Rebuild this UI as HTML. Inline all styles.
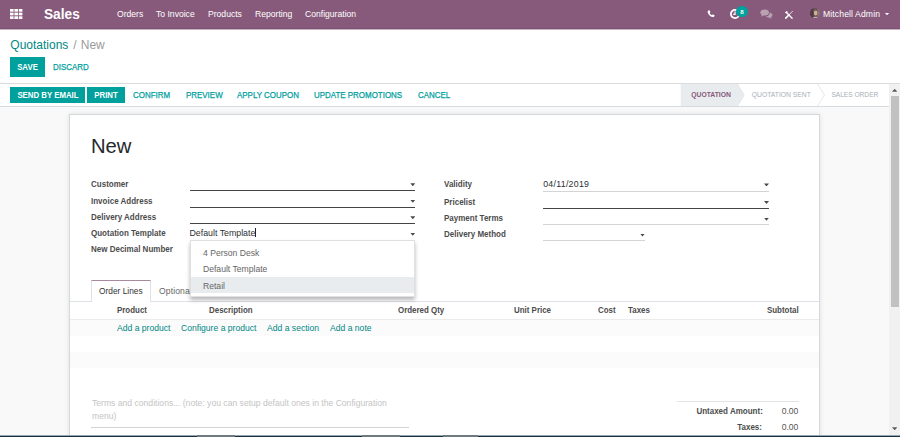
<!DOCTYPE html>
<html>
<head>
<meta charset="utf-8">
<title>Odoo - Quotations</title>
<style>
*{box-sizing:border-box;margin:0;padding:0}
html,body{width:900px;height:437px;overflow:hidden;background:#f9f9f9;font-family:"Liberation Sans",sans-serif;font-size:8.5px;color:#4c4c4c}
.abs{position:absolute;white-space:nowrap}
#nav{left:0;top:0;width:900px;height:30px;background:linear-gradient(#875a7b 0,#875a7b 28px,#7f5273 28px,#7f5273 29px,#c7b3c1 29px,#c7b3c1 30px)}
#nav .t{position:absolute;color:#fff;white-space:nowrap}
#cp{left:0;top:30px;width:900px;height:54px;background:#fff;border-bottom:1px solid #dcdcdc}
#sb{left:0;top:84px;width:889px;height:23px;background:#fff;border-bottom:1px solid #d6dbe0}
.btnp{position:absolute;background:#00a09d;color:#fff;font-weight:bold;text-align:center;white-space:nowrap}
.btnl{position:absolute;color:#00a09d;white-space:nowrap;-webkit-text-stroke:0.25px #00a09d;transform:scaleX(0.914);transform-origin:0 50%}
.sx{display:inline-block;transform:scaleX(0.9);transform-origin:50% 50%}
#sheet{left:69px;top:114px;width:751px;height:330px;background:#fff;border:1px solid #d3d8dd;box-shadow:0 0 5px rgba(0,0,0,0.1)}
.lbl{position:absolute;font-weight:bold;color:#4c4c4c;white-space:nowrap;font-size:8.3px;transform:scaleX(0.965);transform-origin:0 50%}
.line{position:absolute;height:1px;background:#454545}
.lline{position:absolute;height:1px;background:#d4d4d4}
.caret{position:absolute;width:5px;height:3px;background:#4a4a4a;clip-path:polygon(0 0,100% 0,50% 100%)}
.th{position:absolute;font-weight:bold;color:#4c4c4c;white-space:nowrap;font-size:8.3px;transform:scaleX(0.955);transform-origin:0 50%}
.lnk{z-index:2;position:absolute;color:#008784;white-space:nowrap;font-size:8.6px}
</style>
</head>
<body>
<!-- NAVBAR -->
<div id="nav" class="abs">
  <svg style="position:absolute;left:10.3px;top:8.7px" width="12.4" height="10" viewBox="0 0 12.4 9.6" preserveAspectRatio="none">
    <g fill="#fff"><rect x="0" y="0" width="3.6" height="2.6"/><rect x="4.4" y="0" width="3.6" height="2.6"/><rect x="8.8" y="0" width="3.6" height="2.6"/>
    <rect x="0" y="3.5" width="3.6" height="2.6"/><rect x="4.4" y="3.5" width="3.6" height="2.6"/><rect x="8.8" y="3.5" width="3.6" height="2.6"/>
    <rect x="0" y="7" width="3.6" height="2.6"/><rect x="4.4" y="7" width="3.6" height="2.6"/><rect x="8.8" y="7" width="3.6" height="2.6"/></g>
  </svg>
  <div class="t" style="left:44.3px;top:4.7px;font-size:15px;font-weight:bold;transform:scaleX(0.912);transform-origin:0 0">Sales</div>
  <div class="t" style="left:117px;top:9px;font-size:8.6px">Orders</div>
  <div class="t" style="left:156px;top:9px;font-size:8.6px">To Invoice</div>
  <div class="t" style="left:208px;top:9px;font-size:8.6px">Products</div>
  <div class="t" style="left:255px;top:9px;font-size:8.6px">Reporting</div>
  <div class="t" style="left:305px;top:9px;font-size:8.6px">Configuration</div>
  <!-- phone -->
  <svg style="position:absolute;left:707.2px;top:10.1px" width="8" height="7.7" viewBox="0 0 9 9" preserveAspectRatio="none"><path d="M2.2 0.4 C1.2 0.8 0.5 1.6 0.8 2.9 C1.4 5.4 3.6 7.6 6.1 8.2 C7.4 8.5 8.2 7.8 8.6 6.8 C8.7 6.5 8.6 6.3 8.3 6.1 L6.9 5.3 C6.6 5.1 6.3 5.2 6.1 5.4 L5.5 6.1 C4.4 5.6 3.4 4.6 2.9 3.5 L3.6 2.9 C3.8 2.7 3.9 2.4 3.7 2.1 L2.9 0.7 C2.7 0.4 2.5 0.3 2.2 0.4 Z" fill="#fff"/></svg>
  <!-- clock -->
  <svg style="position:absolute;left:728.6px;top:7.8px" width="12" height="12" viewBox="0 0 12 12"><circle cx="6" cy="6" r="4.1" fill="none" stroke="#fff" stroke-width="1.8"/><path d="M6 3.6V6.3H4.2" fill="none" stroke="#fff" stroke-width="1.2"/></svg>
  <div style="position:absolute;left:736.2px;top:5.9px;width:11.6px;height:11.4px;border-radius:6px;background:#00a09d"></div>
  <div class="t" style="left:740.2px;top:8.4px;font-size:6.2px;font-weight:bold">8</div>
  <!-- chat -->
  <svg style="position:absolute;left:760px;top:9px" width="13" height="11" viewBox="0 0 13 11"><path d="M4.6 0.6 C7.2 0.6 9 1.9 9 3.6 C9 5.3 7.2 6.6 4.6 6.6 C4.2 6.6 3.8 6.56 3.4 6.5 C2.8 7.1 1.9 7.5 1 7.6 C1.4 7.1 1.7 6.6 1.8 5.9 C0.8 5.4 0.3 4.5 0.3 3.6 C0.3 1.9 2 0.6 4.6 0.6 Z" fill="#b9a2b1"/><path d="M9.8 3.4 C11.5 3.8 12.4 4.8 12.4 5.9 C12.4 6.8 11.9 7.6 10.9 8.1 C11 8.7 11.3 9.2 11.7 9.7 C10.8 9.6 9.9 9.2 9.3 8.6 C8 8.8 6.6 8.5 5.7 7.6 C8.2 7.3 9.9 5.7 9.8 3.4 Z" fill="#b9a2b1"/></svg>
  <!-- tools -->
  <svg style="position:absolute;left:783.6px;top:10.1px" width="9.7" height="9.7" viewBox="0 0 11 11"><path d="M2.6 2.6 L9.2 9.4" stroke="#fff" stroke-width="1.5" stroke-linecap="round" fill="none"/><path d="M1.3 2.5 L2.6 3.6 L3.8 2.5 L2.7 1.2" stroke="#fff" stroke-width="1.1" fill="none"/><path d="M9.6 1.6 L6 5.2" stroke="#fff" stroke-width="0.9" stroke-linecap="round" fill="none"/><path d="M5.6 5.6 L2 9.2" stroke="#fff" stroke-width="1.8" stroke-linecap="round" fill="none"/></svg>
  <!-- avatar -->
  <svg style="position:absolute;left:810px;top:7.8px" width="10" height="10.4" viewBox="0 0 20 20" preserveAspectRatio="none"><defs><clipPath id="av"><circle cx="10" cy="10" r="10"/></clipPath></defs><g clip-path="url(#av)"><rect width="20" height="20" fill="#6b4f55"/><rect x="0" y="0" width="7" height="20" fill="#4f3a46"/><rect x="15" y="2" width="5" height="18" fill="#8d7575"/><ellipse cx="11.3" cy="9.5" rx="3.6" ry="5" fill="#cfae9d"/><path d="M5.5 7 C7 1.5 15 1.5 16.5 7 C13 4.6 9 4.6 5.5 7 Z" fill="#7a6558"/><path d="M5 20 C6 15.5 16 15.5 17 20 Z" fill="#b9a8ad"/></g></svg>
  <div class="t" style="left:823px;top:9px;font-size:8.6px;letter-spacing:0.12px">Mitchell Admin</div>
  <div style="position:absolute;left:884.7px;top:12.7px;width:4.7px;height:2.6px;background:#fff;clip-path:polygon(0 0,100% 0,50% 100%)"></div>
</div>

<!-- CONTROL PANEL -->
<div id="cp" class="abs">
  <div class="abs" style="left:10.3px;top:8px;font-size:12px;color:#008784">Quotations<span style="color:#9a9a9a"><span style="margin:0 4.3px 0 4.8px">/</span>New</span></div>
  <div class="btnp" style="left:10px;top:27px;width:35px;height:20px;line-height:21.8px;font-size:8.7px"><span class="sx">SAVE</span></div>
  <div class="btnl" style="left:53px;top:27px;line-height:21.8px;font-size:8.7px">DISCARD</div>
</div>

<!-- STATUS BAR -->
<div id="sb" class="abs">
  <div class="btnp" style="left:10px;top:3px;width:75px;height:16px;line-height:17px;font-size:8.7px"><span class="sx">SEND BY EMAIL</span></div>
  <div class="btnp" style="left:87px;top:3px;width:37.5px;height:16px;line-height:17px;font-size:8.7px"><span class="sx">PRINT</span></div>
  <div class="btnl" style="left:133px;top:3px;line-height:17px;font-size:8.7px">CONFIRM</div>
  <div class="btnl" style="left:186px;top:3px;line-height:17px;font-size:8.7px">PREVIEW</div>
  <div class="btnl" style="left:237px;top:3px;line-height:17px;font-size:8.7px">APPLY COUPON</div>
  <div class="btnl" style="left:314px;top:3px;line-height:17px;font-size:8.7px">UPDATE PROMOTIONS</div>
  <div class="btnl" style="left:418px;top:3px;line-height:17px;font-size:8.7px">CANCEL</div>
  <svg style="position:absolute;left:680px;top:0" width="209" height="22" viewBox="0 0 209 22">
    <path d="M0.7 0 H57.5 L64.2 11 L57.5 22 H0.7 Z" fill="#e9ecef"/>
    <path d="M57.5 0 L64.2 11 L57.5 22" fill="none" stroke="#dee2e6" stroke-width="0.8"/>
    <path d="M137.5 0 L144.5 11 L137.5 22" fill="none" stroke="#dee2e6" stroke-width="0.8"/>
    <text x="11.2" y="12.7" font-family="Liberation Sans, sans-serif" font-size="6.8" font-weight="bold" fill="#875a7b">QUOTATION</text>
    <text x="71.8" y="12.7" font-family="Liberation Sans, sans-serif" font-size="6.75" fill="#a7afb7">QUOTATION SENT</text>
    <text x="151.4" y="12.7" font-family="Liberation Sans, sans-serif" font-size="6.6" fill="#a7afb7">SALES ORDER</text>
  </svg>
</div>

<!-- SHEET -->
<div id="sheet" class="abs">
  <div class="abs" style="left:21px;top:19.4px;font-size:20.8px;color:#24282c;transform:scaleX(0.972);transform-origin:0 0">New</div>

  <div class="lbl" style="left:21px;top:64px">Customer</div>
  <div class="lbl" style="left:21px;top:80.5px">Invoice Address</div>
  <div class="lbl" style="left:21px;top:97px">Delivery Address</div>
  <div class="lbl" style="left:21px;top:113.3px">Quotation Template</div>
  <div class="lbl" style="left:21px;top:129.2px">New Decimal Number</div>

  <div class="line" style="left:120px;top:75px;width:225px"></div>
  <div class="line" style="left:120px;top:92px;width:225px"></div>
  <div class="line" style="left:120px;top:108px;width:225px"></div>
  <div class="caret" style="left:340.3px;top:68.3px"></div>
  <div class="caret" style="left:340.3px;top:84.8px"></div>
  <div class="caret" style="left:340.3px;top:101.2px"></div>
  <div class="caret" style="left:340.3px;top:117.7px"></div>
  <div class="abs" style="left:119.5px;top:113.1px;font-size:8.8px;color:#2b2f33">Default Template<span style="display:inline-block;width:1px;height:9px;background:#222;vertical-align:-1px"></span></div>

  <div class="lbl" style="left:374px;top:64px">Validity</div>
  <div class="lbl" style="left:374px;top:81.6px">Pricelist</div>
  <div class="lbl" style="left:374px;top:98.3px">Payment Terms</div>
  <div class="lbl" style="left:374px;top:114.3px">Delivery Method</div>
  <div class="abs" style="left:473.2px;top:64.3px;font-size:8.8px;letter-spacing:0.27px;color:#2b2f33">04/11/2019</div>
  <div class="lline" style="left:473px;top:76px;width:226px"></div>
  <div class="line" style="left:473px;top:93px;width:226px"></div>
  <div class="lline" style="left:473px;top:109px;width:226px"></div>
  <div class="lline" style="left:473px;top:125px;width:102px"></div>
  <div class="caret" style="left:694px;top:68.4px"></div>
  <div class="caret" style="left:694px;top:85.9px"></div>
  <div class="caret" style="left:694px;top:102.8px"></div>
  <div class="caret" style="left:570px;top:118.5px"></div>

  <!-- tabs -->
  <div class="abs" style="left:0;top:186px;width:749px;height:1px;background:#dee2e6"></div>
  <div class="abs" style="left:21px;top:165px;width:60px;height:22px;background:#fff;border:1px solid #dee2e6;border-top:1px solid #a78a9e;border-bottom:none"></div>
  <div class="abs" style="left:29px;top:171.2px;font-size:8.6px;color:#333;transform:scaleX(0.972);transform-origin:0 50%">Order Lines</div>
  <div class="abs" style="left:89px;top:171.2px;font-size:8.6px;color:#666;letter-spacing:0.1px">Optional Products</div>

  <!-- table header -->
  <div class="th" style="left:47px;top:190px">Product</div>
  <div class="th" style="left:139px;top:190px">Description</div>
  <div class="th" style="left:328px;top:190px">Ordered Qty</div>
  <div class="th" style="left:444px;top:190px">Unit Price</div>
  <div class="th" style="left:528px;top:190px">Cost</div>
  <div class="th" style="left:558px;top:190px">Taxes</div>
  <div class="th" style="left:697px;top:190px">Subtotal</div>
  <div class="abs" style="left:0;top:204px;width:749px;height:1px;background:#ebebeb"></div>
  <div class="lnk" style="left:47px;top:207.7px">Add a product</div>
  <div class="lnk" style="left:111px;top:207.7px">Configure a product</div>
  <div class="lnk" style="left:197px;top:207.7px">Add a section</div>
  <div class="lnk" style="left:260px;top:207.7px">Add a note</div>
  <div class="abs" style="left:0;top:205px;width:749px;height:16px;background:#fbfbfb"></div>
  <div class="abs" style="left:0;top:237px;width:749px;height:16px;background:#fbfbfb"></div>

  <!-- terms -->
  <div class="abs" style="left:22px;top:282px;font-size:8.6px;color:#c4c4c4;white-space:normal;width:320px;line-height:12.5px">Terms and conditions... (note: you can setup default ones in the Configuration menu)</div>
  <div class="lline" style="left:21px;top:312px;width:318px"></div>

  <!-- totals -->
  <div class="lline" style="left:607px;top:286px;width:122px;background:#e4e4e4"></div>
  <div class="lbl" style="left:623.9px;top:291px;width:68px;text-align:right;transform-origin:100% 50%">Untaxed Amount:</div>
  <div class="abs" style="left:699.4px;top:291px;width:29px;text-align:right;font-size:8.6px;color:#555">0.00</div>
  <div class="lbl" style="left:624.1px;top:307px;width:68px;text-align:right;transform-origin:100% 50%">Taxes:</div>
  <div class="abs" style="left:699.4px;top:307px;width:29px;text-align:right;font-size:8.6px;color:#555">0.00</div>

  <!-- dropdown -->
  <div class="abs" style="left:120px;top:125px;width:225px;height:57px;background:#fff;border:1px solid #e0e0e0;box-shadow:0 3px 4px rgba(0,0,0,0.28)">
    <div class="abs" style="left:0;top:36px;width:223px;height:16.3px;background:#e9ecef"></div>
    <div class="abs" style="left:12px;top:6.7px;font-size:8.6px;color:#666">4 Person Desk</div>
    <div class="abs" style="left:12px;top:22.8px;font-size:8.6px;color:#666">Default Template</div>
    <div class="abs" style="left:12px;top:39.6px;font-size:8.6px;color:#666">Retail</div>
  </div>
</div>

<!-- scrollbar -->
<div class="abs" style="left:889px;top:84px;width:11px;height:353px;background:#f1f1f1">
  <div style="position:absolute;left:3px;top:4.7px;width:5.4px;height:3px;background:#5a5a5a;clip-path:polygon(50% 0,100% 100%,0 100%)"></div>
  <div style="position:absolute;left:2px;top:12px;width:8px;height:211px;background:#c1c1c1"></div>
  <div style="position:absolute;left:3px;top:343.2px;width:5.4px;height:3px;background:#5a5a5a;clip-path:polygon(0 0,100% 0,50% 100%)"></div>
</div>
<div class="abs" style="left:0;top:435px;width:900px;height:1px;background:#9aa6af"></div>
<div class="abs" style="left:0;top:436px;width:900px;height:1px;background:#17303f"></div>
<div class="abs" style="left:197px;top:435px;width:38px;height:2px;background:#6f7a80"></div>
<div class="abs" style="left:362px;top:435px;width:38px;height:2px;background:#6f7a80"></div>
<div class="abs" style="left:443px;top:435px;width:35px;height:2px;background:#6f7a80"></div>
</body>
</html>
